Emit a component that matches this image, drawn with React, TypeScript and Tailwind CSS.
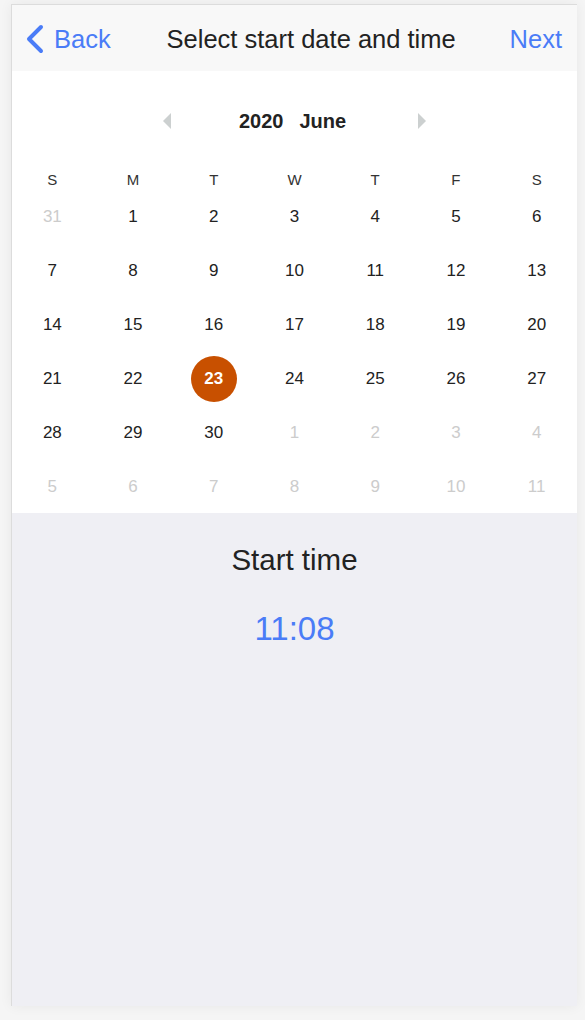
import React from "react";

const weekdays = ["S", "M", "T", "W", "T", "F", "S"];

type Day = { d: number; dim?: boolean; sel?: boolean };

const rows: Day[][] = [
  [{ d: 31, dim: true }, { d: 1 }, { d: 2 }, { d: 3 }, { d: 4 }, { d: 5 }, { d: 6 }],
  [{ d: 7 }, { d: 8 }, { d: 9 }, { d: 10 }, { d: 11 }, { d: 12 }, { d: 13 }],
  [{ d: 14 }, { d: 15 }, { d: 16 }, { d: 17 }, { d: 18 }, { d: 19 }, { d: 20 }],
  [{ d: 21 }, { d: 22 }, { d: 23, sel: true }, { d: 24 }, { d: 25 }, { d: 26 }, { d: 27 }],
  [{ d: 28 }, { d: 29 }, { d: 30 }, { d: 1, dim: true }, { d: 2, dim: true }, { d: 3, dim: true }, { d: 4, dim: true }],
  [{ d: 5, dim: true }, { d: 6, dim: true }, { d: 7, dim: true }, { d: 8, dim: true }, { d: 9, dim: true }, { d: 10, dim: true }, { d: 11, dim: true }],
];

export default function App() {
  return (
    <div
      className="min-h-[1020px] w-[585px] bg-[#f5f5f5] pl-[11px] pt-[4px]"
      style={{ fontFamily: '"Liberation Sans", Arial, sans-serif' }}
    >
      <div className="flex h-[1002px] w-[566px] flex-col border-l border-t border-[#dcdcdc] shadow-[0_0_12px_rgba(0,0,0,0.06)]">
        {/* Header */}
        <div className="flex h-[66px] items-center justify-between bg-[#f8f8f8] pl-[13px] pr-[15px] pt-[2px]">
          <div className="flex items-center gap-[9px] text-[25.5px] text-[#4a7cf7]">
            <svg width="20" height="30" viewBox="0 0 20 30" fill="none">
              <path d="M16 3 L4 15 L16 27" stroke="#4a7cf7" strokeWidth="4" strokeLinecap="round" strokeLinejoin="round" />
            </svg>
            <span>Back</span>
          </div>
          <div className="pl-[2px] text-[25.5px] text-[#222]">Select start date and time</div>
          <div className="text-[25.5px] text-[#4a7cf7]">Next</div>
        </div>

        {/* Calendar */}
        <div className="bg-white">
          <div className="mt-[34px] flex h-[32px] items-center justify-center">
            <svg width="8" height="16" viewBox="0 0 8 16">
              <polygon points="8,0 0,8 8,16" fill="#ccd0d0" />
            </svg>
            <div className="ml-[68px] mr-[72px] flex gap-[16px] text-[20px] font-bold text-[#222]">
              <span>2020</span>
              <span>June</span>
            </div>
            <svg width="8" height="16" viewBox="0 0 8 16">
              <polygon points="0,0 8,8 0,16" fill="#ccd0d0" />
            </svg>
          </div>
          <div className="mt-[32px] grid h-[20px] grid-cols-7 items-center text-center text-[15px] text-[#333]">
            {weekdays.map((w, i) => (
              <div key={i}>{w}</div>
            ))}
          </div>
          {rows.map((r, ri) => (
            <div key={ri} className="grid h-[54px] grid-cols-7 items-center pt-[2px]">
              {r.map((c, ci) => (
                <div key={ci} className="flex items-center justify-center">
                  {c.sel ? (
                    <div className="flex h-[46px] w-[46px] items-center justify-center rounded-full bg-[#c85000] text-[17px] font-bold text-white">
                      {c.d}
                    </div>
                  ) : (
                    <span className={`text-[17px] ${c.dim ? "text-[#cccccc]" : "text-[#222]"}`}>{c.d}</span>
                  )}
                </div>
              ))}
            </div>
          ))}
        </div>

        {/* Time section */}
        <div className="flex flex-1 flex-col items-center bg-[#efeff4] pt-[29px]">
          <div className="text-[29.5px] leading-[36px] text-[#222]">Start time</div>
          <div className="mt-[32px] text-[33px] leading-[38px] text-[#4a7cf7]">11:08</div>
        </div>
      </div>
    </div>
  );
}
